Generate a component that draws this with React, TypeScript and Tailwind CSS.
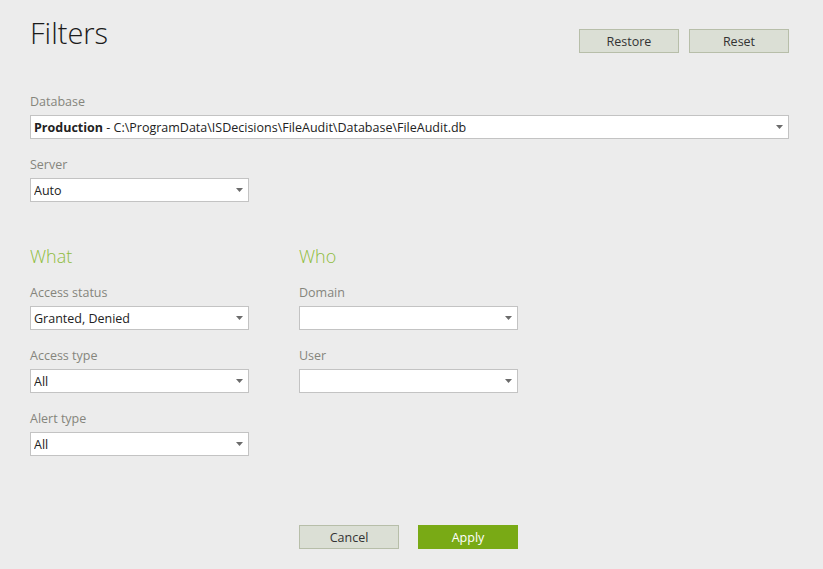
import React from 'react';

const Caret = () => (
    <svg width="7" height="4" viewBox="0 0 7 4" className="shrink-0">
        <path d="M0 0 H7 L3.5 4 Z" fill="#6b6b6b" />
    </svg>
);

interface SelectProps {
    value?: React.ReactNode;
    className?: string;
}

const Select: React.FC<SelectProps> = ({ value, className = '' }) => (
    <div className={`h-[24px] bg-white border border-[#c3c3c3] flex items-center justify-between pl-[3px] pr-[5px] text-[12.5px] text-[#222] ${className}`}>
        <span className="truncate leading-[18px] pt-[1px]">{value}</span>
        <Caret />
    </div>
);

const Field: React.FC<{ label: string; value?: React.ReactNode; wide?: boolean; first?: boolean }> = ({ label, value, wide, first }) => (
    <div className={first ? '' : 'mt-[17px]'}>
        <div className="h-[18px] leading-[18px] text-[12.5px] text-[#85857c] mb-[4px]">{label}</div>
        <Select value={value} className={wide ? 'w-full' : 'w-[219px]'} />
    </div>
);

const GrayButton: React.FC<{ children: React.ReactNode }> = ({ children }) => (
    <button className="w-[100px] h-[24px] pt-[1px] bg-[#dbdfd5] border border-[#b7bea9] text-[12.5px] text-[#333] leading-[18px]">
        {children}
    </button>
);

export default function App() {
    return (
        <div className="w-[823px] h-[569px] bg-[#ececec] px-[30px] pr-[34px] overflow-hidden" style={{ fontFamily: '"Open Sans", "Noto Sans", sans-serif' }}>
            {/* Header */}
            <div className="flex justify-between items-start h-[93px]">
                <h1 className="mt-[13px] text-[29px] leading-[40px] font-light text-[#1b1b1b]">Filters</h1>
                <div className="flex gap-[10px] mt-[29px]">
                    <GrayButton>Restore</GrayButton>
                    <GrayButton>Reset</GrayButton>
                </div>
            </div>

            <Field
                first
                wide
                label="Database"
                value={<><span className="font-bold">Production</span> - C:\ProgramData\ISDecisions\FileAudit\Database\FileAudit.db</>}
            />
            <Field label="Server" value="Auto" />

            <div className="grid grid-cols-[219px_219px] gap-x-[50px] mt-[42px]">
                <div>
                    <h2 className="h-[24px] leading-[24px] text-[18px] font-light text-[#8fbc3c] mb-[16px]">What</h2>
                    <Field first label="Access status" value="Granted, Denied" />
                    <Field label="Access type" value="All" />
                    <Field label="Alert type" value="All" />
                </div>
                <div>
                    <h2 className="h-[24px] leading-[24px] text-[18px] font-light text-[#8fbc3c] mb-[16px]">Who</h2>
                    <Field first label="Domain" />
                    <Field label="User" />
                </div>
                <div />
                <div className="flex gap-[19px] mt-[69px]">
                    <GrayButton>Cancel</GrayButton>
                    <button className="w-[100px] h-[24px] pt-[1px] bg-[#79aa15] text-[12.5px] text-white leading-[18px]">Apply</button>
                </div>
            </div>
        </div>
    );
}
